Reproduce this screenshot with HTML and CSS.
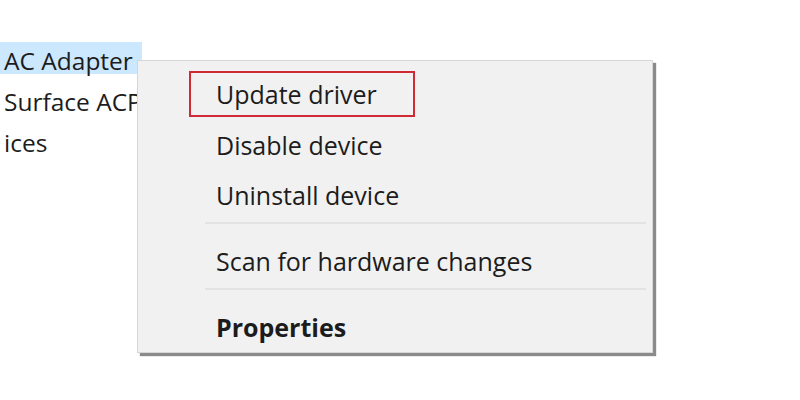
FILE: index.html
```html
<!DOCTYPE html>
<html>
<head>
<meta charset="utf-8">
<link rel="stylesheet" href="styles.css">
</head>
<body>
<div class="stage">
  <ul class="tree">
    <li class="tree-item selected">AC Adapter</li>
    <li class="tree-item">Surface ACPI</li>
    <li class="tree-item">ices</li>
  </ul>
  <div class="menu">
    <div class="menu-item"><span class="label framed">Update driver</span></div>
    <div class="menu-item"><span class="label">Disable device</span></div>
    <div class="menu-item"><span class="label">Uninstall device</span></div>
    <div class="sep"></div>
    <div class="menu-item"><span class="label">Scan for hardware changes</span></div>
    <div class="sep"></div>
    <div class="menu-item last bold"><span class="label">Properties</span></div>
  </div>
</div>
</body>
</html>
```
FILE: styles.css
```css
html, body {
  margin: 0;
  padding: 0;
  background: #ffffff;
}
body {
  width: 800px;
  height: 400px;
  overflow: hidden;
  font-family: "Open Sans", "Noto Sans", sans-serif;
  color: #1c1c1c;
}
.stage {
  position: relative;
  width: 800px;
  height: 400px;
}
.tree {
  list-style: none;
  margin: 0;
  padding: 40px 0 0 0;
  width: 142px;
}
.tree-item {
  height: 41px;
  line-height: 41px;
  font-size: 24.5px;
  padding-left: 4px;
  white-space: nowrap;
}
.tree-item.selected {
  background: linear-gradient(#cce8ff, #cce8ff) no-repeat 0 2px / 100% 32px;
}
.menu {
  position: absolute;
  left: 137px;
  top: 60px;
  width: 516px;
  height: 293px;
  box-sizing: border-box;
  background: #f1f1f1;
  border: 1px solid #d6d6d6;
  box-shadow: 3px 3px 1px #8a8a8a;
  padding-top: 9px;
  overflow: hidden;
}
.menu-item {
  height: 50px;
  display: flex;
  align-items: center;
  padding-left: 78px;
  font-size: 25px;
}
.menu-item.last { height: 49px; }
.label.framed {
  box-sizing: border-box;
  margin-left: -27px;
  width: 226px;
  height: 46px;
  margin-top: -2px;
  padding-left: 25px;
  display: flex;
  align-items: center;
  border: 2px solid #cf2a35;
}
.menu-item.bold { font-weight: 700; }
.sep {
  height: 2px;
  background: #e3e3e3;
  margin: 2px 6px 12px 67px;
}
```
